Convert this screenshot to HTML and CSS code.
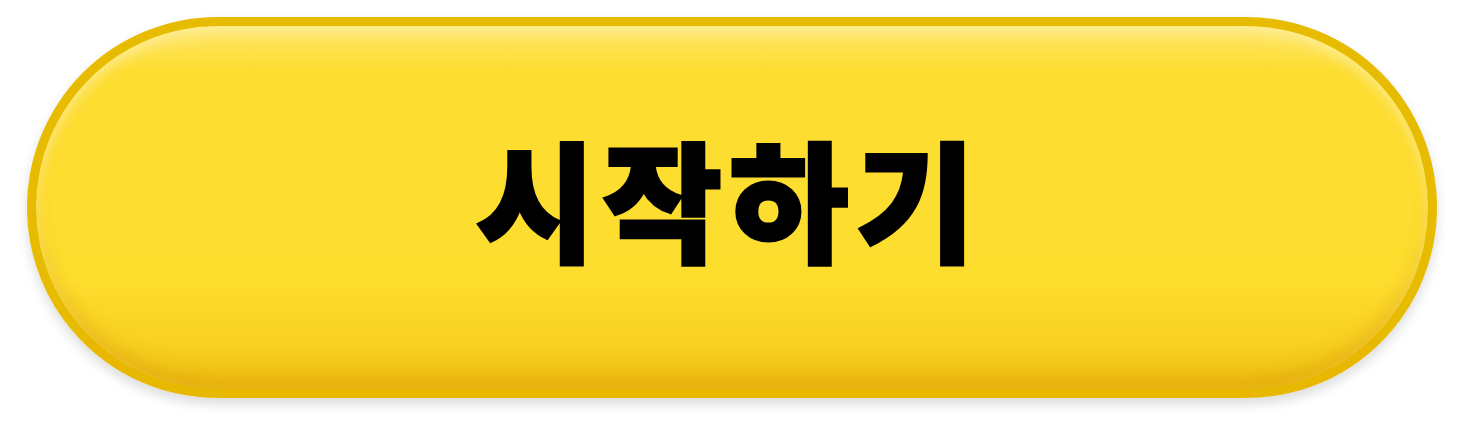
FILE: index.html
```html
<!DOCTYPE html>
<html lang="ko">
<head>
<meta charset="utf-8">
<link rel="stylesheet" href="styles.css">
</head>
<body>
<div class="stage">
  <button class="start-btn" type="button"><span class="label">시작하기</span></button>
</div>
</body>
</html>
```
FILE: styles.css
```css
html, body {
  margin: 0;
  padding: 0;
  background: #ffffff;
}
.stage {
  width: 1464px;
  height: 435px;
  padding: 17px 0 0 27px;
  box-sizing: border-box;
}
.start-btn {
  width: 1410px;
  height: 381px;
  box-sizing: border-box;
  border: 9px solid #E6BB00;
  border-bottom-color: #E8B800;
  border-radius: 191px;
  background: linear-gradient(to bottom, #FFE66A 0%, #FDDD30 12%, #FDDD2E 70%, #F7D022 88%, #EDBC10 100%);
  box-shadow:
    0 6px 12px rgba(0, 0, 0, 0.14),
    inset 0 12px 16px -6px rgba(255, 240, 160, 0.9),
    inset 8px 0 14px -8px rgba(255, 240, 160, 0.5),
    inset -8px 0 14px -8px rgba(255, 240, 160, 0.5),
    inset 0 -16px 18px -6px rgba(226, 168, 10, 0.75);
  display: flex;
  align-items: center;
  justify-content: center;
  padding: 0;
  cursor: pointer;
}
.label {
  font-family: "Noto Sans CJK KR", "Noto Sans", sans-serif;
  font-weight: 900;
  font-size: 130px;
  line-height: 1;
  letter-spacing: 7px;
  color: #000000;
  -webkit-text-stroke: 3px #000000;
  stroke-linejoin: round;
  margin-right: 6px;
  margin-bottom: 26px;
}
```
